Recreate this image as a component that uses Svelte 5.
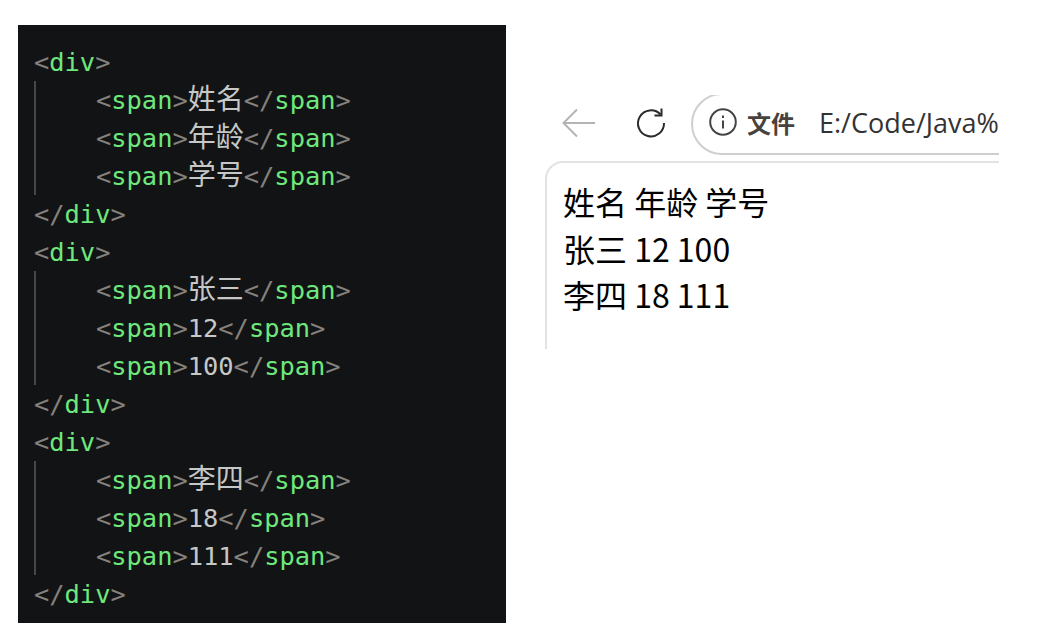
<script>
  const blocks = [
    { rows: [["姓名", true], ["年龄", true], ["学号", true]] },
    { rows: [["张三", true], ["12", false], ["100", false]] },
    { rows: [["李四", true], ["18", false], ["111", false]] }
  ];
  const results = ["姓名 年龄 学号", "张三 12 100", "李四 18 111"];
</script>

<div class="page">
  <section class="code">
    {#each blocks as block}
      <div class="line"><span class="p">&lt;</span><span class="t">div</span><span class="p">&gt;</span></div>
      <div class="inner">
        {#each block.rows as [val, cjk]}
          <div class="line"><span class="p">&lt;</span><span class="t">span</span><span class="p">&gt;</span><span class="v" class:cjk={cjk}>{val}</span><span class="p">&lt;/</span><span class="t">span</span><span class="p">&gt;</span></div>
        {/each}
      </div>
      <div class="line"><span class="p">&lt;/</span><span class="t">div</span><span class="p">&gt;</span></div>
    {/each}
  </section>

  <section class="browser">
    <div class="toolbar">
      <svg class="back" width="36" height="32" viewBox="0 0 36 32" fill="none" stroke="#b4b4b4" stroke-width="2">
        <path d="M34 16H3M16 2.5 2.5 16 16 29.5" />
      </svg>
      <svg class="reload" width="32" height="32" viewBox="0 0 32 32" fill="none" stroke="#2b2b2b" stroke-width="2">
        <path d="M25.5 7.5A13 13 0 1 0 29 16" />
        <path d="M26.5 1.5V8.5H19.5" />
      </svg>
      <div class="address">
        <svg class="info" width="28" height="28" viewBox="0 0 28 28" fill="none" stroke="#444" stroke-width="2">
          <circle cx="14" cy="14" r="12.8" />
          <path d="M14 12.5V20.5" />
          <path d="M14 7.5V10" />
        </svg>
        <b>文件</b>
        <span class="url">E:/Code/Java%</span>
      </div>
    </div>
    <div class="content">
      {#each results as r}
        <div>{r}</div>
      {/each}
    </div>
  </section>
</div>

<style>
  :global(body) {
    background: #fff;
  }

  .page {
    display: flex;
    align-items: flex-start;
    width: 1054px;
    height: 636px;
    overflow: hidden;
    padding: 25px 0 0 18px;
    box-sizing: border-box;
  }

  .code {
    width: 488px;
    height: 598px;
    box-sizing: border-box;
    flex: none;
    padding: 18px 0 0 16px;
    background: #121315;
    font-family: "DejaVu Sans Mono", monospace;
    font-size: 25.4px;
  }

  .line {
    height: 38px;
    line-height: 38px;
    white-space: nowrap;
  }

  .inner {
    padding-left: 62px;
    box-shadow: inset 2px 0 0 #45474a;
  }

  .p {
    color: #85817c;
  }

  .t {
    color: #6ee87c;
  }

  .v {
    color: #c5c8c6;
  }

  .cjk {
    font-family: "Noto Sans CJK SC", sans-serif;
    font-size: 28px;
    line-height: 1;
  }

  .browser {
    width: 454px;
    margin: 70px 0 0 39px;
    flex: none;
    overflow: hidden;
  }

  .toolbar {
    display: flex;
    align-items: center;
    height: 59px;
    padding: 0 0 3px 16px;
    box-sizing: border-box;
  }

  .back {
    flex: none;
  }

  .reload {
    flex: none;
    margin-left: 38px;
  }

  .address {
    flex: none;
    align-self: flex-start;
    display: flex;
    align-items: center;
    width: 400px;
    height: 62px;
    margin: -2px 0 0 24px;
    padding: 0 0 4px 16px;
    box-sizing: border-box;
    border: 2px solid #cfcfcf;
    border-radius: 31px;
    white-space: nowrap;
  }

  .info {
    flex: none;
  }

  .address b {
    margin-left: 10px;
    color: #48423d;
    font-family: "Noto Sans CJK SC", sans-serif;
    font-size: 24px;
  }

  .url {
    margin-left: 24px;
    color: #333;
    font-family: "Open Sans", sans-serif;
    font-size: 27px;
  }

  .content {
    height: 188px;
    margin-top: 7px;
    padding: 15px 0 0 16px;
    box-sizing: border-box;
    border: solid #e3e3e3;
    border-width: 2px 0 0 2px;
    border-top-left-radius: 18px;
    color: #000;
    font-family: "Noto Sans CJK SC", sans-serif;
    font-size: 32px;
    line-height: 46.5px;
  }
</style>
